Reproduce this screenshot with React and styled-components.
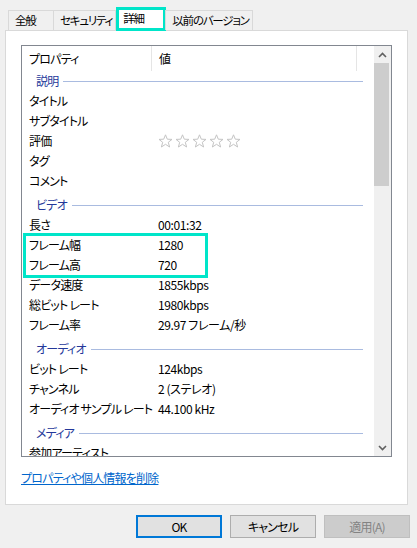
import React from "react";
import styled, { createGlobalStyle } from "styled-components";

const GlobalStyle = createGlobalStyle`
  html, body {
    margin: 0;
    padding: 0;
    background: #f0f0f0;
  }
  body {
    font-family: "Noto Sans CJK JP", "Noto Sans", sans-serif;
    font-size: 12px;
    font-feature-settings: "palt";
    letter-spacing: -0.8px;
    color: #000;
  }
`;

const TEAL = "#00e5c9";

const groups = [
  {
    title: "説明",
    rows: [
      ["タイトル", ""],
      ["サブタイトル", ""],
      ["評価", "stars"],
      ["タグ", ""],
      ["コメント", ""],
    ],
  },
  {
    title: "ビデオ",
    rows: [
      ["長さ", "00:01:32"],
      ["フレーム幅", "1280", true],
      ["フレーム高", "720", true],
      ["データ速度", "1855kbps"],
      ["総ビット レート", "1980kbps"],
      ["フレーム率", "29.97 フレーム/秒"],
    ],
  },
  {
    title: "オーディオ",
    rows: [
      ["ビット レート", "124kbps"],
      ["チャンネル", "2 (ステレオ)"],
      ["オーディオ サンプル レート", "44.100 kHz"],
    ],
  },
  {
    title: "メディア",
    rows: [["参加アーティスト", ""]],
  },
];

function Star() {
  return (
    <svg width="15" height="14" viewBox="0 0 15 14">
      <path
        d="M7.5 0.8 L9.3 5.2 L14 5.4 L10.3 8.3 L11.6 13 L7.5 10.3 L3.4 13 L4.7 8.3 L1 5.4 L5.7 5.2 Z"
        fill="#fff"
        stroke="#c4c4c4"
        strokeWidth="1"
        strokeLinejoin="round"
      />
    </svg>
  );
}

function Chevron({ down }) {
  return (
    <svg width="9" height="6" viewBox="0 0 9 6">
      <path
        d={down ? "M1 1 L4.5 4.5 L8 1" : "M1 5 L4.5 1.5 L8 5"}
        fill="none"
        stroke="#606060"
        strokeWidth="1.6"
      />
    </svg>
  );
}

function PropRow({ label, value }) {
  return (
    <Row>
      <Label>{label}</Label>
      {value === "stars" ? (
        <Stars>
          {[0, 1, 2, 3, 4].map((i) => (
            <Star key={i} />
          ))}
        </Stars>
      ) : (
        <Value>{value}</Value>
      )}
    </Row>
  );
}

export default function App() {
  return (
    <Window>
      <GlobalStyle />
      <TabStrip>
        <Tab $w={46}>全般</Tab>
        <Tab $w={63}>セキュリティ</Tab>
        <Tab $w={50} $active>詳細</Tab>
        <Tab $w={85}>以前のバージョン</Tab>
      </TabStrip>
      <Panel>
        <ListBox>
          <ListContent>
            <HeaderRow>
              <HeaderCell $w={130}>プロパティ</HeaderCell>
              <HeaderCell $w={205}>値</HeaderCell>
            </HeaderRow>
            {groups.map((g, gi) => {
              const plain = g.rows.filter((r) => !r[2]);
              const marked = g.rows.filter((r) => r[2]);
              return (
                <React.Fragment key={g.title}>
                  <GroupRow $first={gi === 0}>
                    <GroupLabel>{g.title}</GroupLabel>
                    <GroupLine />
                  </GroupRow>
                  {plain.slice(0, 1).map((r) => (
                    <PropRow key={r[0]} label={r[0]} value={r[1]} />
                  ))}
                  {marked.length > 0 && (
                    <Highlight>
                      {marked.map((r) => (
                        <PropRow key={r[0]} label={r[0]} value={r[1]} />
                      ))}
                    </Highlight>
                  )}
                  {plain.slice(1).map((r) => (
                    <PropRow key={r[0]} label={r[0]} value={r[1]} />
                  ))}
                </React.Fragment>
              );
            })}
          </ListContent>
          <Scrollbar>
            <ScrollButton>
              <Chevron />
            </ScrollButton>
            <Thumb />
            <Track />
            <ScrollButton>
              <Chevron down />
            </ScrollButton>
          </Scrollbar>
        </ListBox>
        <RemoveLink href="#">プロパティや個人情報を削除</RemoveLink>
      </Panel>
      <ButtonRow>
        <DialogButton $primary>OK</DialogButton>
        <DialogButton>キャンセル</DialogButton>
        <DialogButton $disabled>適用(A)</DialogButton>
      </ButtonRow>
    </Window>
  );
}

const Window = styled.div`
  width: 417px;
  height: 548px;
  background: #f0f0f0;
  overflow: hidden;
`;

const TabStrip = styled.div`
  display: flex;
  align-items: flex-end;
  height: 30px;
  padding-left: 8px;
  position: relative;
  z-index: 1;
`;

const Tab = styled.div`
  box-sizing: border-box;
  min-width: ${(p) => p.$w}px;
  height: ${(p) => (p.$active ? 24 : 20)}px;
  margin-bottom: ${(p) => (p.$active ? -1 : 0)}px;
  padding: 0 ${(p) => (p.$active ? 4 : 3)}px 0 ${(p) => (p.$active ? 4 : 6)}px;
  border: ${(p) => (p.$active ? `3px solid ${TEAL}` : "1px solid #d9d9d9")};
  border-bottom: ${(p) => (p.$active ? `3px solid ${TEAL}` : "none")};
  margin-left: ${(p) => (p.$active ? 0 : -1)}px;
  background: ${(p) => (p.$active ? "#fff" : "#f0f0f0")};
  font-size: 11.5px;
  letter-spacing: -1.2px;
  line-height: ${(p) => (p.$active ? 16 : 19)}px;
  white-space: nowrap;
  &:first-child {
    margin-left: 0;
  }
`;

const Panel = styled.div`
  box-sizing: border-box;
  width: 403px;
  height: 475px;
  margin-left: 5px;
  background: #fff;
  border: 1px solid #d9d9d9;
  padding: 14px 0 0 15px;
`;

const ListBox = styled.div`
  box-sizing: border-box;
  width: 371px;
  height: 412px;
  border: 1px solid #828790;
  display: flex;
  overflow: hidden;
`;

const ListContent = styled.div`
  flex: 1;
  overflow: hidden;
`;

const HeaderRow = styled.div`
  display: flex;
  height: 25px;
`;

const HeaderCell = styled.div`
  box-sizing: border-box;
  width: ${(p) => p.$w}px;
  padding-left: 7px;
  border-right: 1px solid #e5e5e5;
  line-height: 25px;
`;

const GroupRow = styled.div`
  display: flex;
  align-items: center;
  height: 20px;
  margin-top: ${(p) => (p.$first ? 0 : 4)}px;
  padding: 0 11px 0 14px;
`;

const GroupLabel = styled.span`
  color: #24389a;
  line-height: 20px;
`;

const GroupLine = styled.div`
  flex: 1;
  height: 1px;
  margin-left: 5px;
  background: #a9bbe0;
`;

const Row = styled.div`
  display: grid;
  grid-template-columns: 129px 1fr;
  align-items: center;
  height: 20px;
  padding-left: 7px;
  white-space: nowrap;
`;

const Label = styled.span`
  line-height: 20px;
`;

const Value = styled.span`
  line-height: 20px;
  letter-spacing: -0.4px;
`;

const Stars = styled.div`
  display: flex;
  gap: 2px;
  align-items: center;
`;

const Highlight = styled.div`
  position: relative;
  &::after {
    content: "";
    position: absolute;
    left: 1px;
    top: -2px;
    width: 185px;
    height: 45px;
    box-sizing: border-box;
    border: 3px solid ${TEAL};
    pointer-events: none;
  }
`;

const Scrollbar = styled.div`
  width: 17px;
  background: #f0f0f0;
  display: flex;
  flex-direction: column;
`;

const ScrollButton = styled.div`
  height: 17px;
  display: flex;
  align-items: center;
  justify-content: center;
`;

const Thumb = styled.div`
  height: 123px;
  margin: 0 2px 0 0;
  background: #cdcdcd;
`;

const Track = styled.div`
  flex: 1;
`;

const RemoveLink = styled.a`
  display: inline-block;
  margin-top: 13px;
  color: #0066cc;
  text-decoration: underline;
  line-height: 16px;
  font-size: 12px;
`;

const ButtonRow = styled.div`
  display: flex;
  justify-content: flex-end;
  gap: 8px;
  padding-right: 7px;
  margin-top: 10px;
`;

const DialogButton = styled.div`
  box-sizing: border-box;
  width: 86px;
  height: 23px;
  display: flex;
  align-items: center;
  justify-content: center;
  font-size: 12px;
  background: ${(p) => (p.$disabled ? "#cccccc" : "#e1e1e1")};
  color: ${(p) => (p.$disabled ? "#838383" : "#000")};
  border: ${(p) =>
    p.$primary
      ? "2px solid #0078d7"
      : p.$disabled
      ? "1px solid #bfbfbf"
      : "1px solid #adadad"};
`;
